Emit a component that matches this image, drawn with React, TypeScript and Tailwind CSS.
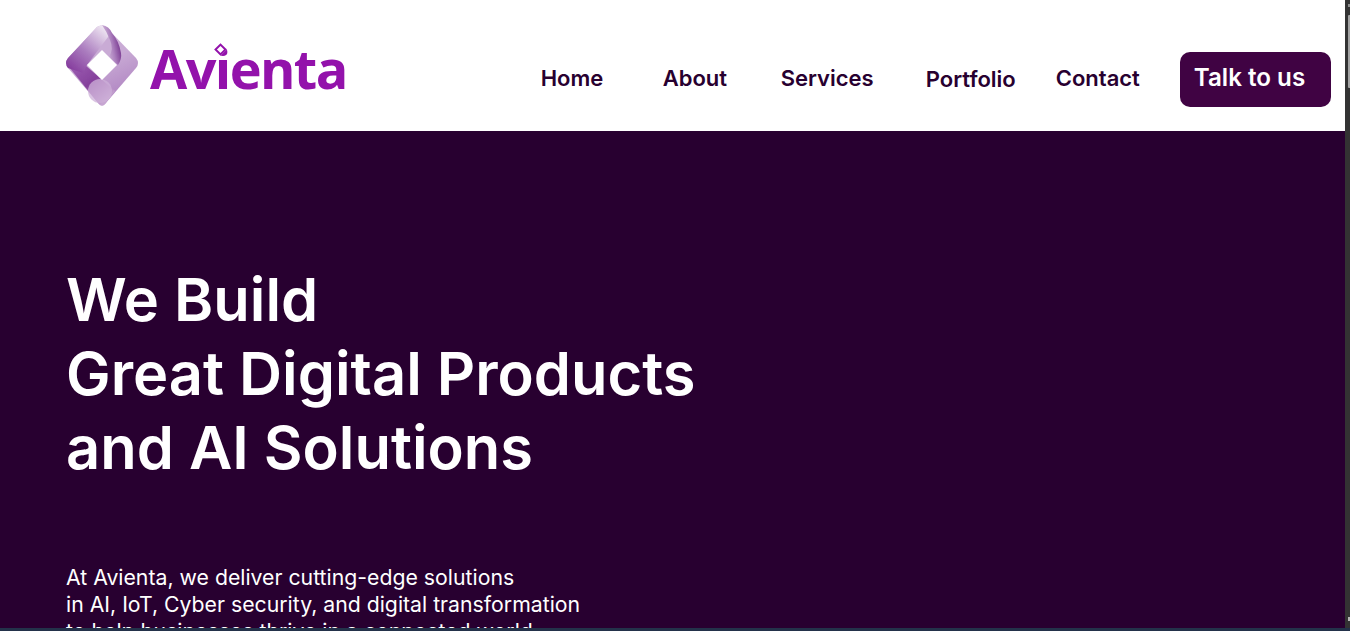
const navLinks = [
  { label: "Home", className: "w-[122px]" },
  { label: "About", className: "w-[118px]" },
  { label: "Services", className: "w-[145px]" },
  { label: "Portfolio", className: "w-[130px] pt-[2px]" },
  { label: "Contact", className: "w-[124px]" },
];

function LogoMark() {
  return (
    <svg width="74" height="82" viewBox="0 0 74 82" className="shrink-0">
      <defs>
        <linearGradient id="leftFace" gradientUnits="userSpaceOnUse" x1="2" y1="50" x2="42" y2="4">
          <stop offset="0" stopColor="#7c2c95" />
          <stop offset="0.5" stopColor="#ab7dbf" />
          <stop offset="1" stopColor="#f1e9f4" />
        </linearGradient>
        <linearGradient id="fold" gradientUnits="userSpaceOnUse" x1="36" y1="20" x2="56" y2="16">
          <stop offset="0" stopColor="#e3d3e9" />
          <stop offset="0.55" stopColor="#ab7fbd" />
          <stop offset="1" stopColor="#6f2c88" />
        </linearGradient>
        <linearGradient id="rightFace" gradientUnits="userSpaceOnUse" x1="50" y1="30" x2="64" y2="60">
          <stop offset="0" stopColor="#c9abd5" />
          <stop offset="1" stopColor="#b48bc5" />
        </linearGradient>
        <linearGradient id="lowFace" gradientUnits="userSpaceOnUse" x1="8" y1="42" x2="38" y2="78">
          <stop offset="0" stopColor="#9a5cb0" />
          <stop offset="0.5" stopColor="#85409c" />
          <stop offset="1" stopColor="#c7a6d2" />
        </linearGradient>
        <filter id="soft">
          <feGaussianBlur stdDeviation="0.5" />
        </filter>
      </defs>
      <g filter="url(#soft)">
        <path d="M3 33 L32 2 Q36 -1 41 2 L71 33 Q75 38 71 43 L40 79 Q37 82 34 79 L3 43 Q-1 38 3 33Z" fill="url(#rightFace)" />
        <path d="M4 42 L20 40 L50 66 L40 79 Q37 82 34 79Z" fill="url(#lowFace)" />
        <path d="M3 33 L32 2 Q36 -1 41 2 L46 8 L22 40 L18 48 L3 43 Q-1 38 3 33Z" fill="url(#leftFace)" />
        <path d="M37 0 Q44 1 47 8 Q54 16 56 28 Q57 34 53 40 L44 32 Q49 24 45 15 Q42 7 37 0Z" fill="url(#fold)" />
        <circle cx="35" cy="66" r="12" fill="#cdb0d8" opacity="0.75" />
        <path d="M37 25 L52 40 L37 55 L22 40Z" fill="#ffffff" />
      </g>
    </svg>
  );
}

function Logo() {
  return (
    <div className="ml-[-1px] flex items-center pt-[1px]">
      <LogoMark />
      <div className="relative ml-[11px] mt-[3px]">
        <span className="block font-['Open_Sans',sans-serif] text-[54px] font-bold leading-[60px] tracking-[-1.6px] text-[#9312ab]">
          Avienta
        </span>
        <span className="absolute left-[66px] top-[7px] h-[9px] w-[9px] rotate-45 border-2 border-[#9312ab] bg-white" />
      </div>
    </div>
  );
}

function Header() {
  return (
    <header className="flex h-[131px] shrink-0 items-center bg-white pl-[66px]">
      <Logo />
      <nav className="ml-[194px] mt-[26px] flex items-center">
        {navLinks.map((link) => (
          <a
            key={link.label}
            href="#"
            className={`${link.className} block text-[22px] font-semibold text-[#280030]`}
          >
            {link.label}
          </a>
        ))}
      </nav>
      <button className="mt-[28px] h-[55px] w-[151px] rounded-[10px] bg-[#400343] pb-[2px] pl-[14px] text-left text-[24.2px] font-semibold text-white">
        Talk to us
      </button>
    </header>
  );
}

function Scrollbar() {
  return (
    <div className="flex w-[5px] shrink-0 flex-col bg-[#333333] pl-[3px]">
      <div className="mt-[4px] h-[3px] w-[2px] bg-[#8f8f8f]" />
      <div className="mt-[8px] h-[73px] w-[2px] rounded-l-[1px] bg-[#a3a3a3]" />
      <div className="mt-auto mb-[7px] h-[4px] w-[2px] bg-[#b5b5b5]" />
    </div>
  );
}

export default function App() {
  return (
    <div className="flex h-[631px] w-[1350px] flex-col overflow-hidden font-['Inter',sans-serif]">
      <div className="flex min-h-0 flex-1">
        <div className="flex min-w-0 flex-1 flex-col">
          <Header />
          <main className="flex-1 bg-[#280030] pl-[66px] pt-[131px] text-white">
            <h1 className="text-[59.6px] font-semibold leading-[74px]">
              We Build
              <br />
              Great Digital Products
              <br />
              and AI Solutions
            </h1>
            <p className="mt-[80px] text-[21.25px] leading-[27px]">
              At Avienta, we deliver cutting-edge solutions
              <br />
              in AI, IoT, Cyber security, and digital transformation
              <br />
              to help businesses thrive in a connected world.
            </p>
          </main>
        </div>
        <Scrollbar />
      </div>
      <div className="h-[3px] shrink-0 bg-[#23324a]" />
    </div>
  );
}
